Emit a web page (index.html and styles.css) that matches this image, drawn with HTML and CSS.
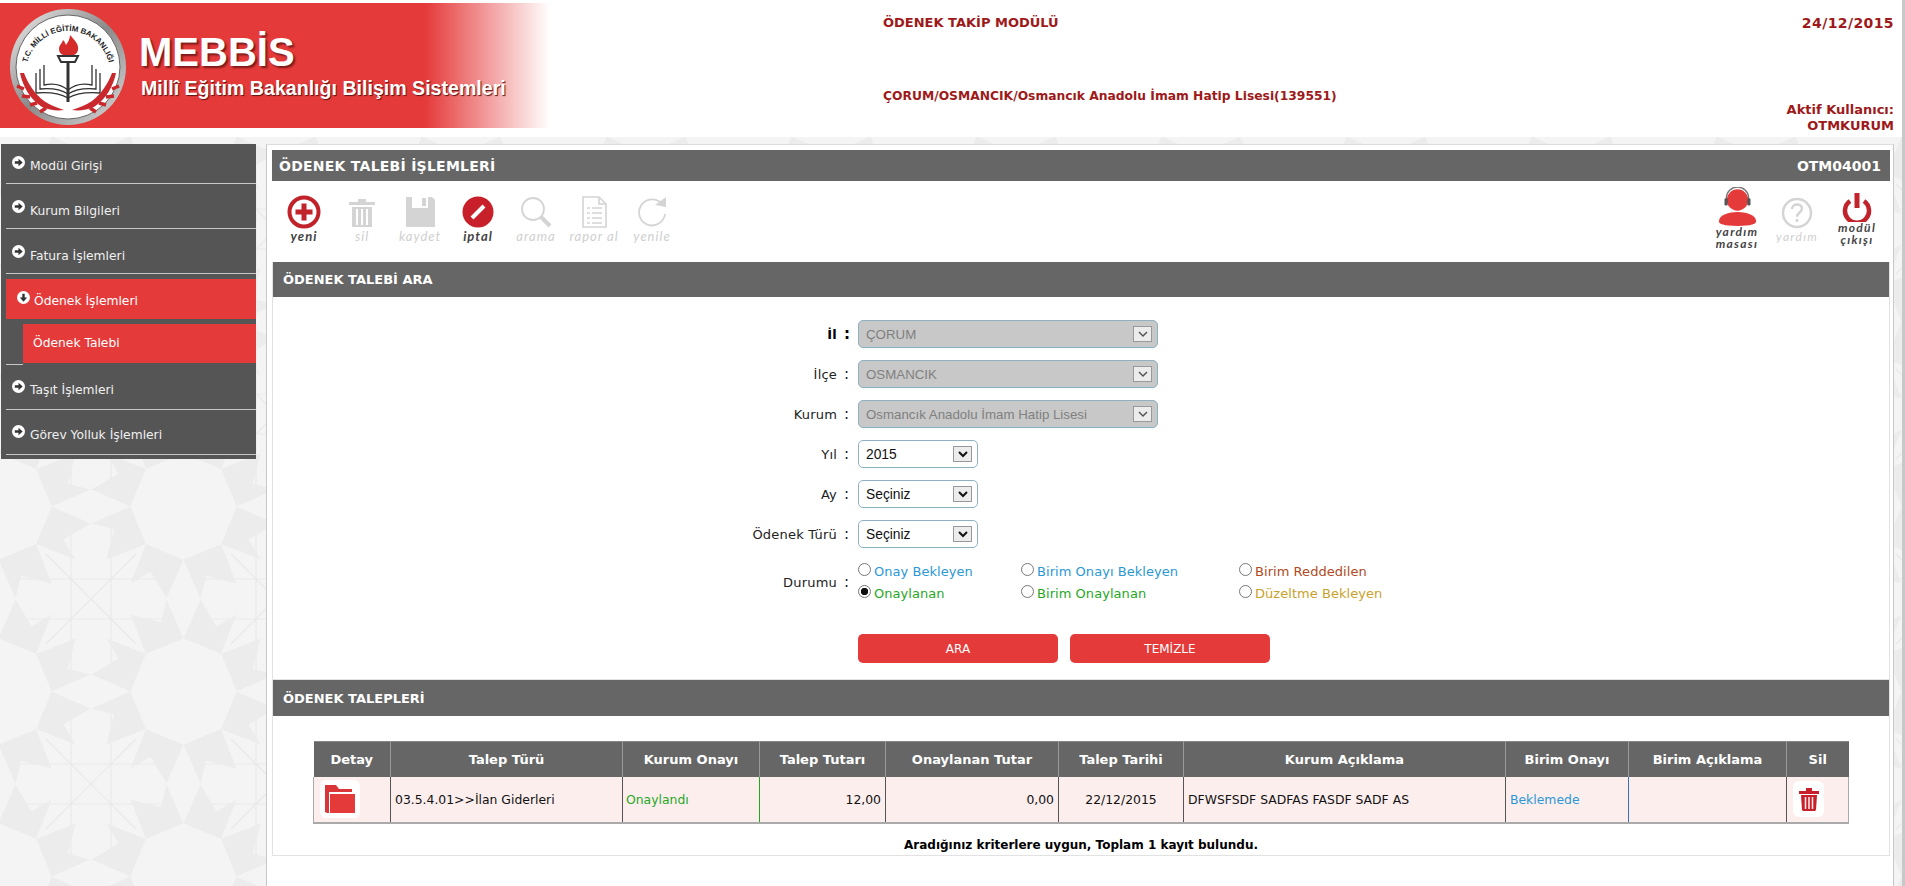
FILE: index.html
```html
<!DOCTYPE html>
<html lang="tr">
<head>
<meta charset="utf-8">
<title>MEBBİS - Ödenek Takip Modülü</title>
<link rel="stylesheet" href="styles.css">
</head>
<body>
<div class="page">
  <header class="top">
    <div class="banner">
      <svg class="logo" width="124" height="124" viewBox="0 0 124 124">
        <defs>
          <linearGradient id="ring" x1="0" y1="0" x2="1" y2="1"><stop offset="0" stop-color="#f0f0f0"/><stop offset=".5" stop-color="#8a8a8a"/><stop offset="1" stop-color="#dcdcdc"/></linearGradient>
          <path id="arc" d="M20 68 A42 42 0 0 1 104 68"/>
        </defs>
        <circle cx="62" cy="62" r="58" fill="url(#ring)"/>
        <circle cx="62" cy="62" r="52" fill="#fff" stroke="#666" stroke-width="1"/>
        <text class="logo-text"><textPath href="#arc" startOffset="50%" text-anchor="middle">T.C. MİLLİ EĞİTİM BAKANLIĞI</textPath></text>
        <path d="M64 30c5 6 9 9 8 15-1 4-4 6-10 6s-9-3-9-7c0-4 3-5 4-9 2 2 2 3 3 5 2-3 4-6 4-10z" fill="#d62b2b"/>
        <path d="M52 51h20l-3 6h-14z" fill="#fff" stroke="#333" stroke-width="2"/>
        <path d="M62 57v40" stroke="#333" stroke-width="3" fill="none"/>
        <path d="M38 60v20c9-2 18 0 24 5 6-5 15-7 24-5V60M34 64v20c10-1 20 0 28 5 8-5 18-6 28-5V64M30 68v20c12-1 23 0 32 5 9-5 20-6 32-5V68" stroke="#333" stroke-width="1.300" fill="none"/>
        <path d="M14 68c3 14 10 26 22 34 7 3 15 4 22 3-8-3-14-5-20-9-9-7-16-17-20-28z" fill="#c9282d"/>
        <path d="M110 68c-3 14-10 26-22 34-7 3-15 4-22 3 8-3 14-5 20-9 9-7 16-17 20-28z" fill="#c9282d"/>
        <path d="M18 84l-7-3M24 92l-8-1M31 98l-7 2M40 103l-6 4M106 84l7-3M100 92l8-1M93 98l7 2M84 103l6 4" stroke="#c9282d" stroke-width="3.500" fill="none"/>
      </svg>
      <div class="brand">
        <div class="brand-name">MEBBİS</div>
        <div class="brand-sub">Millî Eğitim Bakanlığı Bilişim Sistemleri</div>
      </div>
    </div>
    <div class="top-mid">
      <div class="top-line">ÖDENEK TAKİP MODÜLÜ</div>
      <div class="top-line top-school">ÇORUM/OSMANCIK/Osmancık Anadolu İmam Hatip Lisesi(139551)</div>
    </div>
    <div class="top-right">
      <div class="top-line top-date">24/12/2015</div>
      <div class="top-line top-user">Aktif Kullanıcı:</div>
      <div class="top-line">OTMKURUM</div>
    </div>
  </header>

  <div class="body-row">
    <nav class="side">
      <a class="mi mi-first"><svg class="arrow" viewBox="0 0 14 14"><circle cx="7" cy="7" r="7" fill="#fff"/><path d="M3 5.700h4V3l4.500 4L7 11V8.300H3z" fill="#333"/></svg><span class="mi-t">Modül Girişi</span></a>
      <a class="mi"><svg class="arrow" viewBox="0 0 14 14"><circle cx="7" cy="7" r="7" fill="#fff"/><path d="M3 5.700h4V3l4.500 4L7 11V8.300H3z" fill="#333"/></svg><span class="mi-t">Kurum Bilgileri</span></a>
      <a class="mi"><svg class="arrow" viewBox="0 0 14 14"><circle cx="7" cy="7" r="7" fill="#fff"/><path d="M3 5.700h4V3l4.500 4L7 11V8.300H3z" fill="#333"/></svg><span class="mi-t">Fatura İşlemleri</span></a>
      <a class="mi-active"><svg class="arrow" viewBox="0 0 14 14"><circle cx="7" cy="7" r="7" fill="#fff"/><path d="M5.700 3v4H3l4 4.500L11 7H8.300V3z" fill="#333"/></svg><span class="mi-t">Ödenek İşlemleri</span></a>
      <a class="mi-sub">Ödenek Talebi</a>
      <div class="mi-rule"></div>
      <a class="mi"><svg class="arrow" viewBox="0 0 14 14"><circle cx="7" cy="7" r="7" fill="#fff"/><path d="M3 5.700h4V3l4.500 4L7 11V8.300H3z" fill="#333"/></svg><span class="mi-t">Taşıt İşlemleri</span></a>
      <a class="mi"><svg class="arrow" viewBox="0 0 14 14"><circle cx="7" cy="7" r="7" fill="#fff"/><path d="M3 5.700h4V3l4.500 4L7 11V8.300H3z" fill="#333"/></svg><span class="mi-t">Görev Yolluk İşlemleri</span></a>
    </nav>

    <main class="main">
      <div class="titlebar"><span class="title-t">ÖDENEK TALEBİ İŞLEMLERİ</span><span>OTM04001</span></div>
      <div class="toolbar">
        <div class="tools">
          <div class="tool on"><svg width="34" height="34" viewBox="0 0 34 34"><circle cx="17" cy="17" r="14.500" fill="#fff" stroke="#c1232b" stroke-width="4"/><path d="M17 8.500v17M8.500 17h17" stroke="#c1232b" stroke-width="5"/></svg><span>yeni</span></div>
          <div class="tool off"><svg width="34" height="34" viewBox="0 0 34 34"><path d="M4 7h26v3H4zM13 4h8v3h-8z" fill="#d4d4d4"/><path d="M7 12h20v20H7z" fill="#d4d4d4"/><path d="M12 14v16M17 14v16M22 14v16" stroke="#fff" stroke-width="2"/></svg><span>sil</span></div>
          <div class="tool off"><svg width="34" height="34" viewBox="0 0 34 34"><path d="M3 2h26l3 3v27H3z" fill="#d4d4d4"/><path d="M9 2h16v11H9z" fill="#fff"/><path d="M19 3h4v8h-4z" fill="#d4d4d4"/></svg><span>kaydet</span></div>
          <div class="tool on"><svg width="34" height="34" viewBox="0 0 34 34"><circle cx="17" cy="17" r="15.500" fill="#c8202a"/><path d="M11 23 23 11" stroke="#fff" stroke-width="4"/></svg><span>iptal</span></div>
          <div class="tool off"><svg width="34" height="34" viewBox="0 0 34 34"><circle cx="14" cy="14" r="11" fill="#fff" stroke="#d4d4d4" stroke-width="1.800"/><path d="M22 22 31 31" stroke="#d4d4d4" stroke-width="4"/></svg><span>arama</span></div>
          <div class="tool off"><svg width="34" height="34" viewBox="0 0 34 34"><path d="M6 2h16l7 7v23H6z" fill="#fff" stroke="#d4d4d4" stroke-width="1.600"/><path d="M22 2v7h7M10 13h3M15 13h10M10 18h3M15 18h10M10 23h3M15 23h10M10 28h3M15 28h10" fill="none" stroke="#d4d4d4" stroke-width="1.600"/></svg><span>rapor al</span></div>
          <div class="tool off"><svg width="34" height="34" viewBox="0 0 34 34"><path d="M27 9A13 13 0 1 0 30 19" fill="none" stroke="#d4d4d4" stroke-width="1.800"/><path d="M20 10 31 12 31 2z" fill="#d4d4d4"/></svg><span>yenile</span></div>
        </div>
        <div class="tools">
          <div class="tool tool-r on"><svg width="41" height="39" viewBox="0 0 44 42"><path d="M22 27c-9 0-20 3-20 10 0 3 5 5 20 5s20-2 20-5c0-7-11-10-20-10z" fill="#e53a3a"/><circle cx="22" cy="14" r="11.500" fill="#e53a3a"/><path d="M10 16V12a12 12 0 0 1 24 0v4" fill="none" stroke="#777" stroke-width="1.400"/><rect x="8" y="12" width="3.500" height="8" rx="1.500" fill="#555"/><rect x="32.500" y="12" width="3.500" height="8" rx="1.500" fill="#555"/></svg><span>yardım<br>masası</span></div>
          <div class="tool tool-r off"><svg width="44" height="44" viewBox="0 0 44 44"><circle cx="22" cy="26" r="14" fill="#fff" stroke="#d4d4d4" stroke-width="2.500"/><path d="M17 22c0-3 2.500-4.500 5-4.500s5 1.500 5 4.200c0 3.800-5 3.800-5 8M22 32v3" fill="none" stroke="#d4d4d4" stroke-width="2.500"/></svg><span>yardım</span></div>
          <div class="tool tool-r on"><svg width="44" height="35" viewBox="0 0 44 35"><path d="M15 14A12 12 0 1 0 29 14" fill="none" stroke="#c1232b" stroke-width="4.500"/><path d="M22 6v15" stroke="#c1232b" stroke-width="5"/></svg><span>modül<br>çıkışı</span></div>
        </div>
      </div>

      <section class="box box-form">
        <h2 class="bar">ÖDENEK TALEBİ ARA</h2>
        <form class="form">
          <label class="lab lab-b">İl<i>:</i></label>
          <div class="sel sel-l sel-off"><span>ÇORUM</span><b><svg width="12" height="8" viewBox="0 0 12 8"><path d="M2 2l4 4 4-4" fill="none" stroke="#555" stroke-width="1.500"/></svg></b></div>
          <label class="lab">İlçe<i>:</i></label>
          <div class="sel sel-l sel-off"><span>OSMANCIK</span><b><svg width="12" height="8" viewBox="0 0 12 8"><path d="M2 2l4 4 4-4" fill="none" stroke="#555" stroke-width="1.500"/></svg></b></div>
          <label class="lab">Kurum<i>:</i></label>
          <div class="sel sel-l sel-off"><span>Osmancık Anadolu İmam Hatip Lisesi</span><b><svg width="12" height="8" viewBox="0 0 12 8"><path d="M2 2l4 4 4-4" fill="none" stroke="#555" stroke-width="1.500"/></svg></b></div>
          <label class="lab">Yıl<i>:</i></label>
          <div class="sel"><span>2015</span><b><svg width="12" height="8" viewBox="0 0 12 8"><path d="M2 2l4 4 4-4" fill="none" stroke="#111" stroke-width="2"/></svg></b></div>
          <label class="lab">Ay<i>:</i></label>
          <div class="sel"><span>Seçiniz</span><b><svg width="12" height="8" viewBox="0 0 12 8"><path d="M2 2l4 4 4-4" fill="none" stroke="#111" stroke-width="2"/></svg></b></div>
          <label class="lab">Ödenek Türü<i>:</i></label>
          <div class="sel"><span>Seçiniz</span><b><svg width="12" height="8" viewBox="0 0 12 8"><path d="M2 2l4 4 4-4" fill="none" stroke="#111" stroke-width="2"/></svg></b></div>
          <label class="lab lab-dur">Durumu<i>:</i></label>
          <div class="radios">
            <label class="rd c-blue"><input type="radio" name="d">Onay Bekleyen</label>
            <label class="rd c-blue"><input type="radio" name="d">Birim Onayı Bekleyen</label>
            <label class="rd c-brown"><input type="radio" name="d">Birim Reddedilen</label>
            <label class="rd c-green"><input type="radio" name="d" checked>Onaylanan</label>
            <label class="rd c-green"><input type="radio" name="d">Birim Onaylanan</label>
            <label class="rd c-gold"><input type="radio" name="d">Düzeltme Bekleyen</label>
          </div>
          <div class="btns"><button type="button" class="btn">ARA</button><button type="button" class="btn">TEMİZLE</button></div>
        </form>
      </section>

      <section class="box box-list">
        <h2 class="bar">ÖDENEK TALEPLERİ</h2>
        <table class="grid">
          <colgroup><col class="w1"><col class="w2"><col class="w3"><col class="w4"><col class="w5"><col class="w6"><col class="w7"><col class="w8"><col class="w9"><col class="w10"></colgroup>
          <thead><tr><th>Detay</th><th>Talep Türü</th><th>Kurum Onayı</th><th>Talep Tutarı</th><th>Onaylanan Tutar</th><th>Talep Tarihi</th><th>Kurum Açıklama</th><th>Birim Onayı</th><th>Birim Açıklama</th><th>Sil</th></tr></thead>
          <tbody><tr>
            <td class="td-icon"><span class="chip"><svg width="30" height="28" viewBox="0 0 30 28"><path d="M0 0h11l3 4h13v3H4v21H2l-2-1z" fill="#d9363a"/><path d="M5 9h25v19H5z" fill="#e53a3a"/></svg></span></td>
            <td>03.5.4.01&gt;&gt;İlan Giderleri</td>
            <td class="td-green">Onaylandı</td>
            <td class="num">12,00</td>
            <td class="num">0,00</td>
            <td class="ctr">22/12/2015</td>
            <td>DFWSFSDF SADFAS FASDF SADF AS</td>
            <td class="td-blue">Beklemede</td>
            <td></td>
            <td class="td-icon"><span class="chip chip-s"><svg width="22" height="24" viewBox="0 0 22 24"><path d="M1 4h20v3H1zM8 1h6v3H8z" fill="#c8202a"/><path d="M3 8h16l-1 15-1 1H5l-1-1z" fill="#c8202a"/><path d="M7.500 10v12M11 10v12M14.500 10v12" stroke="#fdeeee" stroke-width="1.500"/></svg></span></td>
          </tr></tbody>
        </table>
        <p class="count">Aradığınız kriterlere uygun, Toplam 1 kayıt bulundu.</p>
      </section>
    </main>
  </div>
</div>
</body>
</html>
```
FILE: styles.css
```css
* { box-sizing: border-box; }
html, body { margin: 0; height: 100%; overflow: hidden; }
body { font-family: "DejaVu Sans", Verdana, sans-serif; font-size: 12px; color: #111; background: #fff; }

.page {
  height: 886px;
  display: flex;
  flex-direction: column;
  border-right: 3px solid #c8c8c8;
}

/* header */
.top { height: 137px; flex: none; display: flex; background: #fff; }
.banner {
  width: 550px; height: 125px; margin-top: 3px; flex: none;
  display: flex; align-items: flex-start;
  background: linear-gradient(to right, #e53a3a 0, #e53a3a 425px, #ffffff 550px);
}
.logo { margin: 2px 0 0 6px; flex: none; }
.logo-text { font: bold 7.800px "Liberation Sans", sans-serif; fill: #222; }
.brand { margin: 0 0 0 9px; font-family: "Liberation Sans", Arial, sans-serif; font-weight: bold; color: #fff; }
.brand-name { font-size: 40px; line-height: 46px; margin-top: 26px; text-shadow: 2px 2px 2px #7a1a1a; }
.brand-sub { font-size: 19.600px; line-height: 24px; margin: 1px 0 0 2px; text-shadow: 1px 1px 1px #5a1212; white-space: nowrap; }

.top-mid { margin-left: 333px; padding-top: 15px; flex: 1; }
.top-line { font-size: 13px; line-height: 16px; font-weight: bold; color: #9e1a1a; }
.top-school { margin-top: 57px; font-size: 12.300px; }
.top-right { padding: 15px 8px 0 0; text-align: right; }
.top-date { font-size: 14px; letter-spacing: .4px; }
.top-user { margin-top: 71px; }

/* body */
.body-row {
  flex: 1; min-height: 0;
  display: flex; align-items: stretch;
  padding: 7px 8px 0 1px;
  background-color: #f4f4f4;
  background-position: 90.500px 91.500px;
  background-image: url("data:image/svg+xml,%3Csvg xmlns='http://www.w3.org/2000/svg' width='185' height='185'%3E%3Cdefs%3E%3Cpolygon id='s' points='0,-53 17,-92 33,-65 53,-77 37.500,-37.500' fill='%23ececec'/%3E%3Cpath id='c' d='M-20 -75V75M20 -75V75M-75 -20H75M-75 20H75M-45 -45 45 45M-45 45 45 -45' fill='none' stroke='%23e9e9e9' stroke-width='1.200'/%3E%3C/defs%3E%3Cuse href='%23c'/%3E%3Cuse href='%23c' x='185'/%3E%3Cuse href='%23c' y='185'/%3E%3Cuse href='%23c' x='185' y='185'/%3E%3Cg transform='translate(92.500 92.500)'%3E%3Cuse href='%23s'/%3E%3Cuse href='%23s' transform='rotate(45)'/%3E%3Cuse href='%23s' transform='rotate(90)'/%3E%3Cuse href='%23s' transform='rotate(135)'/%3E%3Cuse href='%23s' transform='rotate(180)'/%3E%3Cuse href='%23s' transform='rotate(225)'/%3E%3Cuse href='%23s' transform='rotate(270)'/%3E%3Cuse href='%23s' transform='rotate(315)'/%3E%3Cpolygon points='0,-53 37.500,-37.500 53,0 37.500,37.500 0,53 -37.500,37.500 -53,0 -37.500,-37.500' fill='%23f4f4f4'/%3E%3C/g%3E%3C/svg%3E");
}

/* sidebar */
.side { width: 255px; height: 315px; flex: none; margin-right: 10px; background: #555; padding-left: 5px; color: #f0f0f0; }
.mi { display: flex; height: 45px; padding: 16px 0 0 6px; border-bottom: 1px solid #c8c8c8; gap: 5px; }
.mi-first { height: 40px; padding-top: 12px; }
.arrow { width: 13px; height: 13px; flex: none; }
.mi-t { font-size: 12.300px; line-height: 16px; margin-top: 3px; white-space: nowrap; }
.mi-first .mi-t { margin-top: 2px; }
.mi-rule ~ .mi .mi-t { margin-top: 2px; }
.mi-rule ~ .mi { padding-top: 15px; }
.mi-active { display: flex; height: 40px; margin-top: 5px; padding: 12px 0 0 11px; gap: 4px; background: #e53a3a; color: #fff; }
.mi-active .mi-t { margin-top: 2px; }
.mi-sub { display: block; height: 39px; margin: 5px 0 0 17px; padding: 11px 0 0 10px; font-size: 12.300px; line-height: 16px; background: #e53a3a; color: #fff; }
.mi-rule { width: 17px; height: 1px; margin-top: 1px; background: #c8c8c8; }

/* main */
.main {
  flex: 1; min-width: 0;
  background: #fff;
  border-left: 1px solid #c8c8c8;
  border-right: 1px solid #c8c8c8;
  border-top: 1px solid #ddd;
  padding: 5px 3px 0 5px;
}
.titlebar {
  height: 31px; display: flex; justify-content: space-between; align-items: center;
  padding: 0 9px 0 7px; background: #666; color: #fff; font-size: 14px; font-weight: bold;
}
.title-t { letter-spacing: .25px; }
.toolbar { height: 81px; display: flex; justify-content: space-between; padding: 0 3px 0 3px; }
.tools { display: flex; }
.tool { width: 58px; display: flex; flex-direction: column; align-items: center; padding-top: 14px; font-family: Lato, sans-serif; font-style: italic; font-size: 13px; line-height: 13px; text-align: center; }
.tool span { margin-top: 1px; letter-spacing: 1px; }
.tool-r { width: 60px; padding-top: 6px; font-size: 12px; line-height: 12px; }
.tool-r span { margin-top: 0; letter-spacing: 1.300px; }
.on { color: #444; font-weight: bold; }
.off { color: #cfcfcf; }

.box { border: 1px solid #e2e2e2; border-top: 0; }
.bar { margin: 0; padding-left: 10px; background: #666; color: #fff; font-size: 13px; font-weight: bold; }
.box-form .bar { height: 35px; line-height: 36px; }
.box-form { height: 418px; }
.box-list { height: 176px; }
.box-list .bar { height: 36px; line-height: 37px; }

.form {
  display: grid;
  grid-template-columns: 574px 1fr;
  grid-auto-rows: 28px;
  row-gap: 12px;
  padding-top: 23px;
}
.lab { display: flex; justify-content: flex-end; align-items: center; font-size: 13px; color: #222; letter-spacing: .2px; }
.lab i { font-style: normal; font-size: 15px; margin-left: 7px; width: 3px; }
.lab-b { font-weight: bold; color: #000; }
.lab-dur { align-self: start; height: 44px; }
.sel {
  width: 120px; height: 28px; margin-left: 11px;
  display: flex; justify-content: space-between; align-items: center;
  padding: 0 5px 0 7px;
  border: 1px solid #8fb2c2; border-radius: 5px; background: #fff;
  font: 13.800px "Liberation Sans", Arial, sans-serif; color: #111;
}
.sel b { width: 19px; height: 16px; display: flex; align-items: center; justify-content: center; border: 1px solid #999; background: #ececec; }
.sel-l { width: 300px; }
.sel-off { background: #c8c8c8; color: #808080; font-size: 13.300px; }
.radios {
  grid-column: 2; height: 44px; margin-left: 11px;
  display: grid; grid-template-columns: 163px 218px 1fr; grid-auto-rows: 22px;
}
.rd { display: flex; align-items: center; font-size: 13px; letter-spacing: .05px; white-space: nowrap; }
.rd input {
  appearance: none; width: 13px; height: 13px; margin: -3px 3px 0 0; flex: none;
  border: 1px solid #777; border-radius: 50%; background: #fff;
}
.rd input:checked { background: radial-gradient(circle, #111 0, #111 3.400px, #fff 4px); }
.c-blue { color: #2a98d6; }
.c-green { color: #1fa81f; }
.c-brown { color: #b04a22; }
.c-gold { color: #c9a22b; }
.btns { grid-column: 2; height: 29px; margin: 34px 0 0 11px; display: flex; gap: 12px; }
.btn { width: 200px; height: 29px; border: 0; border-radius: 5px; background: #e53a3a; color: #fff; font: 12px "DejaVu Sans", sans-serif; }

.grid { width: 1535px; margin: 25px 0 0 40px; border-collapse: collapse; table-layout: fixed; }
.w1 { width: 77px; } .w2 { width: 232px; } .w3 { width: 137px; } .w4 { width: 126px; } .w5 { width: 173px; }
.w6 { width: 125px; } .w7 { width: 322px; } .w8 { width: 123px; } .w9 { width: 158px; } .w10 { width: 62px; }
.grid th { height: 35px; padding: 0; background: #666; color: #fff; font-size: 13px; font-weight: bold; border-right: 1px solid #999; border-top: 1px solid #888; }
.grid th:last-child { border-right: 0; }
.grid td { height: 46px; padding: 0 4px; background: #fdeeee; font-size: 12.400px; color: #111; border-right: 1px solid #555; border-bottom: 2px solid #aaa; white-space: nowrap; }
.grid td:first-child { border-left: 1px solid #aaa; }
.grid td:last-child { border-right: 1px solid #aaa; }
.grid .td-icon { padding-left: 6px; }
.ctr { text-align: center; }
.num { text-align: right; }
.grid .td-green { color: #1fa81f; border-right-color: #1fa81f; padding-left: 3px; }
.grid .td-blue { color: #2a98d6; border-right-color: #3a6fc0; padding-left: 4px; }
.chip { display: inline-flex; width: 40px; height: 38px; align-items: center; justify-content: center; background: #fff; border-radius: 6px; vertical-align: middle; }
.chip-s { width: 31px; height: 36px; }
.count { margin: 13px 0 0; text-align: center; font-size: 12px; font-weight: bold; color: #000; line-height: 16px; }
```
